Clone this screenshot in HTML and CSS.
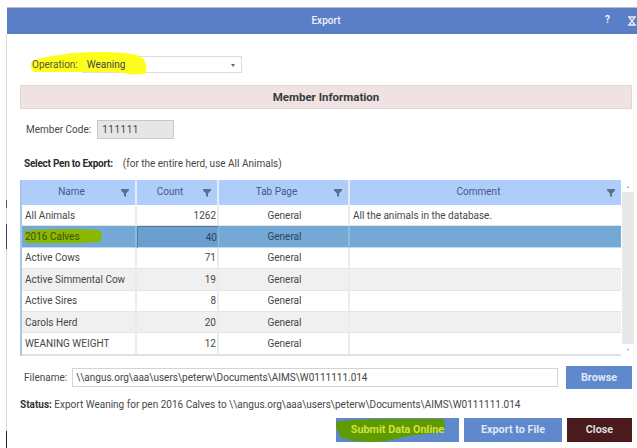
FILE: index.html
```html
<!DOCTYPE html>
<html lang="en">
<head>
<meta charset="utf-8">
<title>Export</title>
<link rel="stylesheet" href="styles.css">
</head>
<body>
<div class="window">
  <header class="titlebar">
    <span class="title">Export</span>
    <span class="help">?</span>
    <svg class="close-x" width="10" height="10" viewBox="0 0 10 10"><path d="M1 1h8M1 9h8M2 1l6 8M8 1l-6 8" stroke="#e8edf6" stroke-width="1.3" fill="none"/></svg>
  </header>
  <main class="content">
    <div class="operation">
      <span class="op-label">Operation:</span>
      <div class="select"><span class="over">Weaning</span><span class="caret"></span></div>
      <svg class="marker marker-op" width="116" height="23" viewBox="0 0 116 23"><path d="M0 11C2 7 18 4 42 1c26-2 56-1 66 3 7 3 8 10 7 17-6 2-14 2-22 0-14-2-24 0-36-1H4C0 19-1 15 0 11z" fill="#fdfd1e"/></svg>
    </div>
    <div class="banner">Member Information</div>
    <div class="member">
      <span>Member Code:</span>
      <div class="readonly">111111</div>
    </div>
    <div class="pen-hint"><b>Select Pen to Export:</b><span>(for the entire herd, use All Animals)</span></div>
    <div class="grid-wrap">
      <div class="grid">
        <div class="row head">
          <div class="cell">Name<svg class="funnel" width="8" height="8" viewBox="0 0 8 8"><path d="M0 0h8v1.6L5 4.4V8L3 7V4.4L0 1.6z"/></svg></div>
          <div class="cell">Count<svg class="funnel" width="8" height="8" viewBox="0 0 8 8"><path d="M0 0h8v1.6L5 4.4V8L3 7V4.4L0 1.6z"/></svg></div>
          <div class="cell">Tab Page<svg class="funnel" width="8" height="8" viewBox="0 0 8 8"><path d="M0 0h8v1.6L5 4.4V8L3 7V4.4L0 1.6z"/></svg></div>
          <div class="cell">Comment<svg class="funnel" width="8" height="8" viewBox="0 0 8 8"><path d="M0 0h8v1.6L5 4.4V8L3 7V4.4L0 1.6z"/></svg></div>
        </div>
        <div class="row"><div class="cell">All Animals</div><div class="cell num">1262</div><div class="cell mid">General</div><div class="cell">All the animals in the database.</div></div>
        <div class="row selected">
          <div class="cell"><span class="over pen-name">2016 Calves</span><svg class="marker marker-pen" width="78" height="15" viewBox="0 0 78 15"><path d="M1 2C15 0 60 0 74 1c5 2 5 9 1 12-20 2-55 1-72 1C0 11 0 6 1 2z" fill="#8ab800"/></svg></div>
          <div class="cell num current">40</div><div class="cell mid">General</div><div class="cell"></div>
        </div>
        <div class="row"><div class="cell">Active Cows</div><div class="cell num">71</div><div class="cell mid">General</div><div class="cell"></div></div>
        <div class="row alt"><div class="cell">Active Simmental Cow</div><div class="cell num">19</div><div class="cell mid">General</div><div class="cell"></div></div>
        <div class="row"><div class="cell">Active Sires</div><div class="cell num">8</div><div class="cell mid">General</div><div class="cell"></div></div>
        <div class="row alt"><div class="cell">Carols Herd</div><div class="cell num">20</div><div class="cell mid">General</div><div class="cell"></div></div>
        <div class="row"><div class="cell">WEANING WEIGHT</div><div class="cell num">12</div><div class="cell mid">General</div><div class="cell"></div></div>
      </div>
      <div class="scrollbar">
        <span class="arrow">&#9650;</span>
        <span class="arrow">&#9660;</span>
      </div>
    </div>
    <div class="file-row">
      <span>Filename:</span>
      <div class="file-input">\\angus.org\aaa\users\peterw\Documents\AIMS\W0111111.014</div>
      <button class="btn browse">Browse</button>
    </div>
    <div class="status"><b>Status:</b> Export Weaning for pen 2016 Calves to \\angus.org\aaa\users\peterw\Documents\AIMS\W0111111.014</div>
    <div class="actions">
      <button class="btn submit">
        <svg class="marker marker-submit" width="110" height="25" viewBox="0 0 110 25"><path d="M0 4C10 1 60 0 107 1c3 3 2 10 0 13-25 3-28 3-40 5-8 2-16 5-30 5-12 0-28-2-32-5C1 14 0 9 0 4z" fill="#5f9a00"/></svg>
        <span class="over">Submit Data Online</span>
      </button>
      <button class="btn export">Export to File</button>
      <button class="btn close">Close</button>
    </div>
  </main>
</div>
</body>
</html>
```
FILE: styles.css
```css
* { box-sizing: border-box; }

html, body { margin: 0; height: 100%; }

body {
  background: #fff;
  font-family: Roboto, "Liberation Sans", sans-serif;
  font-size: 10px;
  color: #474747;
  overflow: hidden;
}

.window {
  width: 637px;
  height: 448px;
  padding: 8px 0 0 7px;
  /* rim of the window behind this one: top edge, then its left edge */
  background:
    linear-gradient(#b9bcc4, #b9bcc4) 7px 7px / 100% 1px no-repeat,
    linear-gradient(#d9d9d9 0 40%, #6a5040 40% 42%, #d9d9d9 42% 46%, #32466e 46% 52%, #d9d9d9 52% 96%, #222 96%) 6px 34px / 1px 414px no-repeat;
}

.titlebar {
  height: 26px;
  background: #5a7fc6;
  color: #eef2fa;
  display: flex;
  align-items: center;
  justify-content: center;
  position: relative;
}

.title { font-weight: 500; margin-left: 8px; transform: translateY(-1px); }

.help {
  position: absolute;
  left: 598px;
  top: 6px;
  font-weight: 700;
}

.close-x { position: absolute; left: 620px; top: 8px; }

.content {
  padding: 22px 5px 0 13px;
  display: flex;
  flex-direction: column;
  align-items: stretch;
}

/* Highlighter strokes sit above the field backgrounds but under their text */
.marker { position: absolute; z-index: 0; }

.over { position: relative; z-index: 1; }

.operation {
  display: flex;
  align-items: center;
  gap: 4px;
  height: 17px;
  margin-left: 12px;
  position: relative;
}

.op-label { position: relative; z-index: 1; color: #5a5a30; }

.marker-op { left: -1px; top: -4px; }

.select {
  width: 160px;
  height: 17px;
  border: 1px solid #dcdcdc;
  background: #fff;
  display: flex;
  align-items: center;
  justify-content: space-between;
  padding: 0 6px 0 4px;
  color: #444;
}

.caret {
  width: 0;
  height: 0;
  border: 2px solid transparent;
  border-top: 3px solid #666;
  margin-top: 3px;
}

.banner {
  margin-top: 12px;
  height: 24px;
  background: #eee2e2;
  border: 1px solid #e6d3d3;
  display: flex;
  align-items: center;
  justify-content: center;
  font-size: 11.5px;
  font-weight: 700;
  color: #3a3a3a;
}

.member {
  margin-top: 11px;
  margin-left: 6px;
  height: 19px;
  display: flex;
  align-items: center;
  gap: 6px;
}

.readonly {
  width: 77px;
  height: 19px;
  background: #e6e6e6;
  border: 1px solid #c9c9c9;
  padding-left: 4px;
  display: flex;
  align-items: center;
  letter-spacing: 0.5px;
}

.pen-hint {
  margin: 17px 0 0 4px;
  height: 14px;
  display: flex;
  align-items: center;
  gap: 10px;
}

.pen-hint b { color: #2c2c2c; letter-spacing: -0.25px; }

.grid-wrap {
  margin-top: 10px;
  display: flex;
  gap: 1px;
  width: 614px;
}

.grid {
  width: 601px;
  border-left: 2px solid #a9c6e8;
  border-bottom: 1px solid #dedede;
}

.row {
  display: grid;
  grid-template-columns: 115px 82px 131px 271px;
  height: 21.4px;
}

.row.head { height: 25px; background: #afcdfa; color: #44588a; }

.row.alt { background: #f0f0f0; }

.row.selected { background: #74a9d6; color: #2a4560; }

.cell {
  display: flex;
  align-items: center;
  padding: 0 3px;
  border-right: 2px solid #ececec;
  border-bottom: 1px solid #e4e4e4;
  position: relative;
  min-width: 0;
  white-space: nowrap;
}

.cell:last-child { border-right: 0; }

.head .cell {
  justify-content: center;
  border-right-color: #e2ecfa;
  border-bottom: 0;
  padding: 0 14px 2px 0;
}

.selected .cell { border-right-color: #8fb9dd; border-bottom-color: #bcdcf2; }

.num { justify-content: flex-end; padding-right: 1px; }

.mid { justify-content: center; padding-left: 5px; }

.current { background: #6b9fcf; border: 1px solid #4f7ba6; }

.pen-name { color: #3f5210; }

.funnel {
  position: absolute;
  right: 6px;
  top: 9px;
  fill: #58718f;
}

.marker-pen { left: 2px; top: 3px; }

.scrollbar {
  width: 12px;
  background: #e8e8e8;
  display: flex;
  flex-direction: column;
  justify-content: space-between;
  align-items: center;
}

.arrow {
  width: 12px;
  height: 12px;
  background: #fff;
  color: #aaa;
  font-size: 4px;
  display: flex;
  align-items: center;
  justify-content: center;
}

.file-row {
  margin-top: 10px;
  margin-left: 4px;
  height: 23px;
  display: flex;
  align-items: center;
  gap: 4px;
}

.file-input {
  width: 486px;
  height: 19px;
  margin-left: 1px;
  border: 1px solid #d4d4d4;
  background: #fff;
  padding-left: 3px;
  display: flex;
  align-items: center;
  color: #444;
}

.btn {
  border: 0;
  font: 700 10.8px Roboto, "Liberation Sans", sans-serif;
  color: #dfe8f6;
  background: #5f89cc;
  display: flex;
  align-items: center;
  justify-content: center;
  padding: 0;
}

.browse { width: 66px; height: 23px; margin-left: 4px; }

.status { margin-top: 10px; height: 13px; white-space: nowrap; }

.status b { color: #333; }

.actions {
  margin-top: 6px;
  display: flex;
  justify-content: flex-end;
  gap: 5px;
  height: 24px;
}

.submit { width: 123px; position: relative; color: #d2e23c; }

.marker-submit { left: 0; top: 0; }

.export { width: 98px; }

.close { width: 65px; background: #4a1a1c; color: #ddd; }
```
